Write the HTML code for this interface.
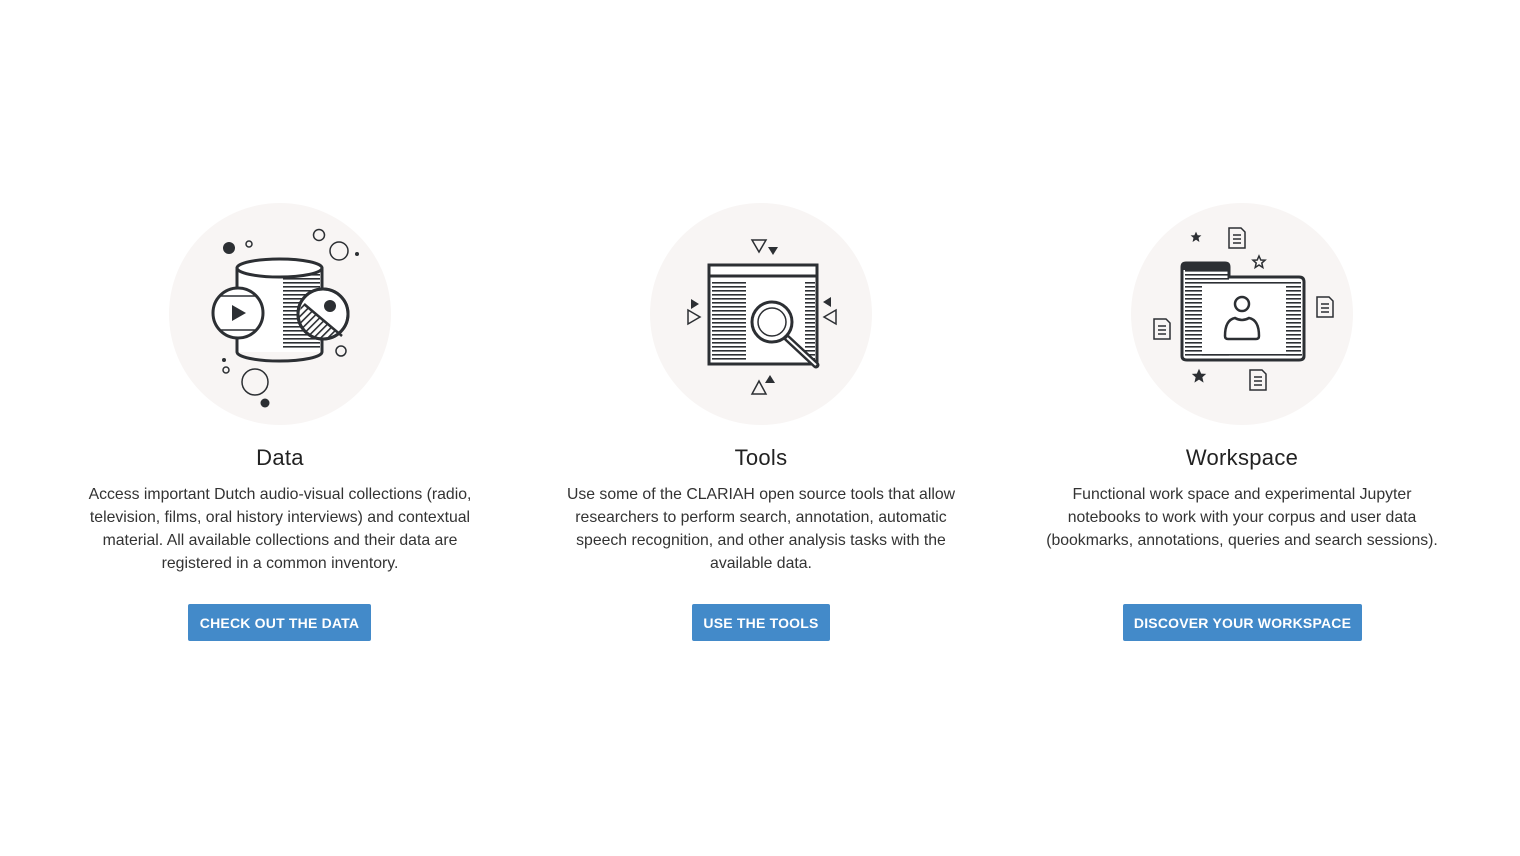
<!DOCTYPE html>
<html><head><meta charset="utf-8"><style>
html,body{margin:0;padding:0;background:#fff;width:1520px;height:856px;overflow:hidden;font-family:"Liberation Sans",sans-serif;color:#333}
.col{position:absolute;top:0;width:480px;margin-left:-240px}
.ic{position:absolute;left:120px;top:194px}
h2{position:absolute;top:445px;left:0;width:480px;margin:0;text-align:center;font-size:22px;font-weight:normal;color:#222;line-height:26px;letter-spacing:0.3px}
p{position:absolute;top:483px;left:0;width:480px;margin:0;text-align:center;font-size:15.8px;line-height:23px;white-space:nowrap;color:#333}
.btn{position:absolute;top:604px;height:37px;line-height:38px;background:#438ac9;color:#fff;font-weight:bold;font-size:14px;text-align:center;border-radius:2px;letter-spacing:0.2px}
</style></head><body>
<svg width="0" height="0" style="position:absolute"><defs>
<pattern id="h" width="6" height="4" patternUnits="userSpaceOnUse"><rect width="6" height="1.6" fill="#2c2f33"/></pattern>
<pattern id="d" width="5" height="5" patternUnits="userSpaceOnUse" patternTransform="rotate(45)"><rect width="1.6" height="5" fill="#2c2f33"/></pattern>
<clipPath id="cc"><circle cx="43" cy="0" r="24"/></clipPath>
</defs></svg>

<div class="col" style="left:280px">
<svg class="ic" width="240" height="240" viewBox="-120 -120 240 240">
<circle r="111" fill="#f8f5f4"/>
<g stroke="#2c2f33" stroke-width="3" fill="none">
<rect x="-43" y="-46" width="85" height="84" fill="#fff" stroke="none"/>
<rect x="3" y="-40" width="37" height="76" fill="url(#h)" stroke="none"/>
<path d="M-43 -46 V38 A42.5 9 0 0 0 42 38 V-46"/>
<ellipse cx="-0.5" cy="-46" rx="42.5" ry="9" fill="#fff"/>
<circle cx="-42" cy="-1" r="25" fill="#fff"/>
<path d="M-59 -18 H-25 M-59 16 H-25" stroke-width="1.5"/>
<circle cx="43" cy="0" r="25" fill="#fff"/>
</g>
<g clip-path="url(#cc)"><path d="M22 -12 L66 27 L10 40Z" fill="url(#d)"/></g>
<circle cx="43" cy="0" r="25" fill="none" stroke="#2c2f33" stroke-width="3"/>
<path d="M24 -10 L62 22" stroke="#2c2f33" stroke-width="2.5"/>
<circle cx="50" cy="-8" r="6" fill="#2c2f33"/>
<path d="M-48 -9 L-34 -1 L-48 7Z" fill="#2c2f33"/>
<g fill="#2c2f33"><circle cx="-51" cy="-66" r="6"/><circle cx="77" cy="-60" r="2"/><circle cx="-56" cy="46" r="2"/><circle cx="-15" cy="89" r="4.5"/></g>
<g fill="none" stroke="#2c2f33" stroke-width="1.5"><circle cx="-31" cy="-70" r="3"/><circle cx="39" cy="-79" r="5.5"/><circle cx="59" cy="-63" r="9"/><circle cx="61" cy="37" r="5"/><circle cx="-54" cy="56" r="3"/><circle cx="-25" cy="68" r="13"/></g>
</svg>
<h2>Data</h2>
<p>Access important Dutch audio-visual collections (radio,<br>television, films, oral history interviews) and contextual<br>material. All available collections and their data are<br>registered in a common inventory.</p>
<div class="btn" style="left:148px;width:183px">CHECK OUT THE DATA</div>
</div>

<div class="col" style="left:761px">
<svg class="ic" width="240" height="240" viewBox="-120 -120 240 240">
<circle r="111" fill="#f8f5f4"/>
<rect x="-52" y="-49" width="108" height="99" fill="#fff"/>
<rect x="-49" y="-34" width="34" height="81" fill="url(#h)"/>
<rect x="44" y="-34" width="10" height="81" fill="url(#h)"/>
<g stroke="#2c2f33" fill="none">
<rect x="-52" y="-49" width="108" height="99" stroke-width="3"/>
<path d="M-52 -38 H56" stroke-width="3"/>
<circle cx="11" cy="8" r="20" fill="#fff" stroke-width="3"/>
<circle cx="11" cy="8" r="14" stroke-width="1.5"/>
<path d="M26 24 L55 51" stroke-width="7" stroke-linecap="round"/>
<path d="M26 24 L55 51" stroke="#fff" stroke-width="2"/>
<path d="M-9 -74 H5 L-2 -62Z M-73 -4 V10 L-61 3Z M75 -4 V10 L63 3Z M-9 80 H5 L-2 67Z" stroke-width="1.5"/>
</g>
<path d="M7 -67 H17 L12 -59Z M-70 -15 L-62 -10 L-70 -5Z M70 -17 L62 -12 L70 -7Z M4 69 H14 L9 61Z" fill="#2c2f33"/>
</svg>
<h2>Tools</h2>
<p>Use some of the CLARIAH open source tools that allow<br>researchers to perform search, annotation, automatic<br>speech recognition, and other analysis tasks with the<br>available data.</p>
<div class="btn" style="left:171px;width:138px">USE THE TOOLS</div>
</div>

<div class="col" style="left:1242px">
<svg class="ic" width="240" height="240" viewBox="-120 -120 240 240">
<circle r="111" fill="#f8f5f4"/>
<path d="M-60 -47 Q-60 -51 -56 -51 H-17 Q-13 -51 -13 -47 V-37 H57 Q62 -37 62 -32 V42 Q62 46 57 46 H-55 Q-60 46 -60 42Z" fill="#fff"/>
<rect x="-57" y="-44" width="44" height="86" fill="url(#h)"/>
<rect x="-13" y="-32" width="72" height="4" fill="url(#h)"/>
<rect x="44" y="-28" width="15" height="70" fill="url(#h)"/>
<rect x="-40" y="-28" width="84" height="66" fill="#fff"/>
<rect x="-40" y="38" width="100" height="4" fill="url(#h)"/>
<path d="M-60 -47 Q-60 -51 -56 -51 H-17 Q-13 -51 -13 -47 V-44 H-60Z" fill="#2c2f33"/>
<path d="M-60 -47 Q-60 -51 -56 -51 H-17 Q-13 -51 -13 -47 V-37 H57 Q62 -37 62 -32 V42 Q62 46 57 46 H-55 Q-60 46 -60 42Z" fill="none" stroke="#2c2f33" stroke-width="3"/>
<g fill="none" stroke="#2c2f33" stroke-width="2.5">
<circle cx="0" cy="-10" r="7"/>
<path d="M-17 22 Q-17 6 -7 4 Q0 8 7 4 Q17 6 17 22 Q17 25 14 25 H-14 Q-17 25 -17 22Z"/>
</g>
<g fill="none" stroke="#2c2f33" stroke-width="1.5">
<g transform="translate(-5,-76)"><path d="M-8 -10 H4 L8 -6 V10 H-8Z M-4 -3 H4 M-4 1 H4 M-4 5 H4"/></g>
<g transform="translate(83,-7)"><path d="M-8 -10 H4 L8 -6 V10 H-8Z M-4 -3 H4 M-4 1 H4 M-4 5 H4"/></g>
<g transform="translate(-80,15)"><path d="M-8 -10 H4 L8 -6 V10 H-8Z M-4 -3 H4 M-4 1 H4 M-4 5 H4"/></g>
<g transform="translate(16,66)"><path d="M-8 -10 H4 L8 -6 V10 H-8Z M-4 -3 H4 M-4 1 H4 M-4 5 H4"/></g>
<path transform="translate(17,-52)" d="M0 -6 L1.8 -2 L6 -1.8 L2.8 1 L3.8 5.5 L0 3 L-3.8 5.5 L-2.8 1 L-6 -1.8 L-1.8 -2Z"/>
</g>
<g fill="#2c2f33">
<path transform="translate(-46,-77) scale(0.9)" d="M0 -6 L1.8 -2 L6 -1.8 L2.8 1 L3.8 5.5 L0 3 L-3.8 5.5 L-2.8 1 L-6 -1.8 L-1.8 -2Z"/>
<path transform="translate(-43,62) scale(1.2)" d="M0 -6 L1.8 -2 L6 -1.8 L2.8 1 L3.8 5.5 L0 3 L-3.8 5.5 L-2.8 1 L-6 -1.8 L-1.8 -2Z"/>
</g>
</svg>
<h2>Workspace</h2>
<p>Functional work space and experimental Jupyter<br>notebooks to work with your corpus and user data<br>(bookmarks, annotations, queries and search sessions).</p>
<div class="btn" style="left:121px;width:239px">DISCOVER YOUR WORKSPACE</div>
</div>
</body></html>
